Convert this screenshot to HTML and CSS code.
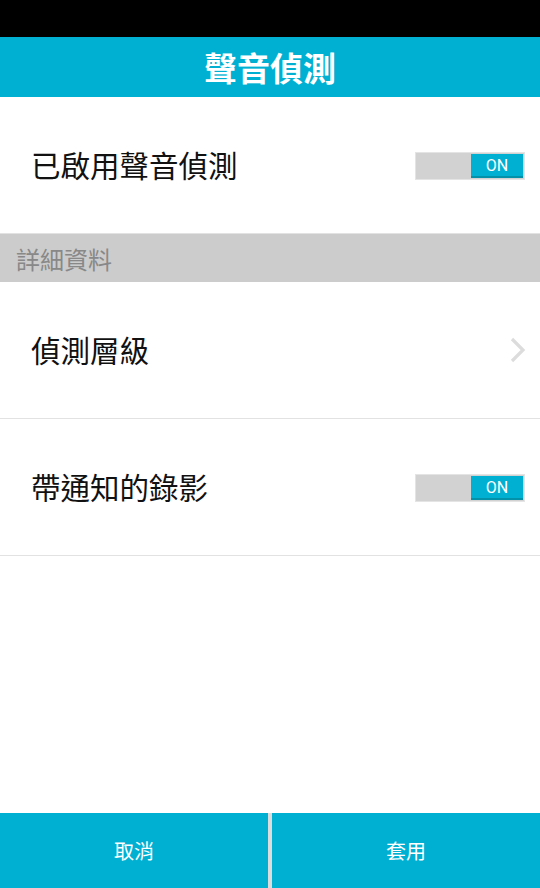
FILE: index.html
```html
<!DOCTYPE html>
<html lang="zh-Hant">
<head>
    <meta charset="UTF-8">
    <meta name="viewport" content="width=device-width, initial-scale=1.0">
    <title>聲音偵測</title>
    <link rel="stylesheet" href="styles.css">
</head>
<body>
    <div class="app">
        <div class="status-bar"></div>
        <header class="title-bar">聲音偵測</header>

        <div class="settings">
            <div class="row">
                <span class="row__label">已啟用聲音偵測</span>
                <span class="switch"><span class="switch__on">ON</span></span>
            </div>

            <div class="section">詳細資料</div>

            <div class="row">
                <span class="row__label">偵測層級</span>
                <svg class="chevron" width="16" height="26" viewBox="0 0 16 26">
                    <path d="M2 2 L13 13 L2 24" fill="none" stroke="#dcdcdc" stroke-width="3.2"/>
                </svg>
            </div>

            <div class="row">
                <span class="row__label">帶通知的錄影</span>
                <span class="switch"><span class="switch__on">ON</span></span>
            </div>
        </div>

        <!-- bottom buttons -->
        <div class="actions">
            <button type="button" class="actions__btn">取消</button>
            <button type="button" class="actions__btn">套用</button>
        </div>
    </div>
</body>
</html>
```

FILE: styles.css
```css
body {
    margin: 0;
    background-color: #fff;
    font-family: "Noto Sans CJK TC", "Noto Sans", sans-serif;
}

.app {
    display: flex;
    flex-direction: column;
    height: 888px;
}

.status-bar {
    height: 37px;
    background-color: #000;
}

.title-bar {
    height: 60px;
    display: flex;
    align-items: center;
    justify-content: center;
    background-color: #00b0d2;
    color: #fff;
    font-size: 33px;
    font-weight: bold;
}

.settings {
    flex: 1;
}

.row {
    height: 136px;
    display: flex;
    align-items: center;
    justify-content: space-between;
    padding: 0 15px 0 31px;
    border-bottom: 1px solid #e2e2e2;
}

.row__label {
    font-size: 29.5px;
    color: #111;
    margin-top: -3px;
}

.section {
    height: 48px;
    display: flex;
    align-items: center;
    padding-left: 16px;
    background-color: #cccccc;
    color: #888;
    font-size: 24px;
}

.chevron {
    margin-right: -1px;
}

.switch {
    width: 106px;
    height: 26px;
    display: flex;
    justify-content: flex-end;
    align-items: center;
    padding: 0 1px;
    margin-top: 2px;
    background-color: #d2d2d2;
    border: 1px solid #e4e4e4;
}

.switch__on {
    width: 52px;
    height: 22px;
    display: flex;
    align-items: center;
    justify-content: center;
    background-color: #00b0d2;
    border-bottom: 2px solid #0391aa;
    color: #fff;
    font-family: Roboto, sans-serif;
    font-size: 16px;
}

.actions {
    height: 75px;
    display: flex;
    gap: 4px;
    background-color: #dcdcdc;
}

.actions__btn {
    flex: 1;
    border: none;
    background-color: #00b0d2;
    color: #fff;
    font-family: "Noto Sans CJK TC", sans-serif;
    font-size: 20px;
    padding: 0;
}
```
